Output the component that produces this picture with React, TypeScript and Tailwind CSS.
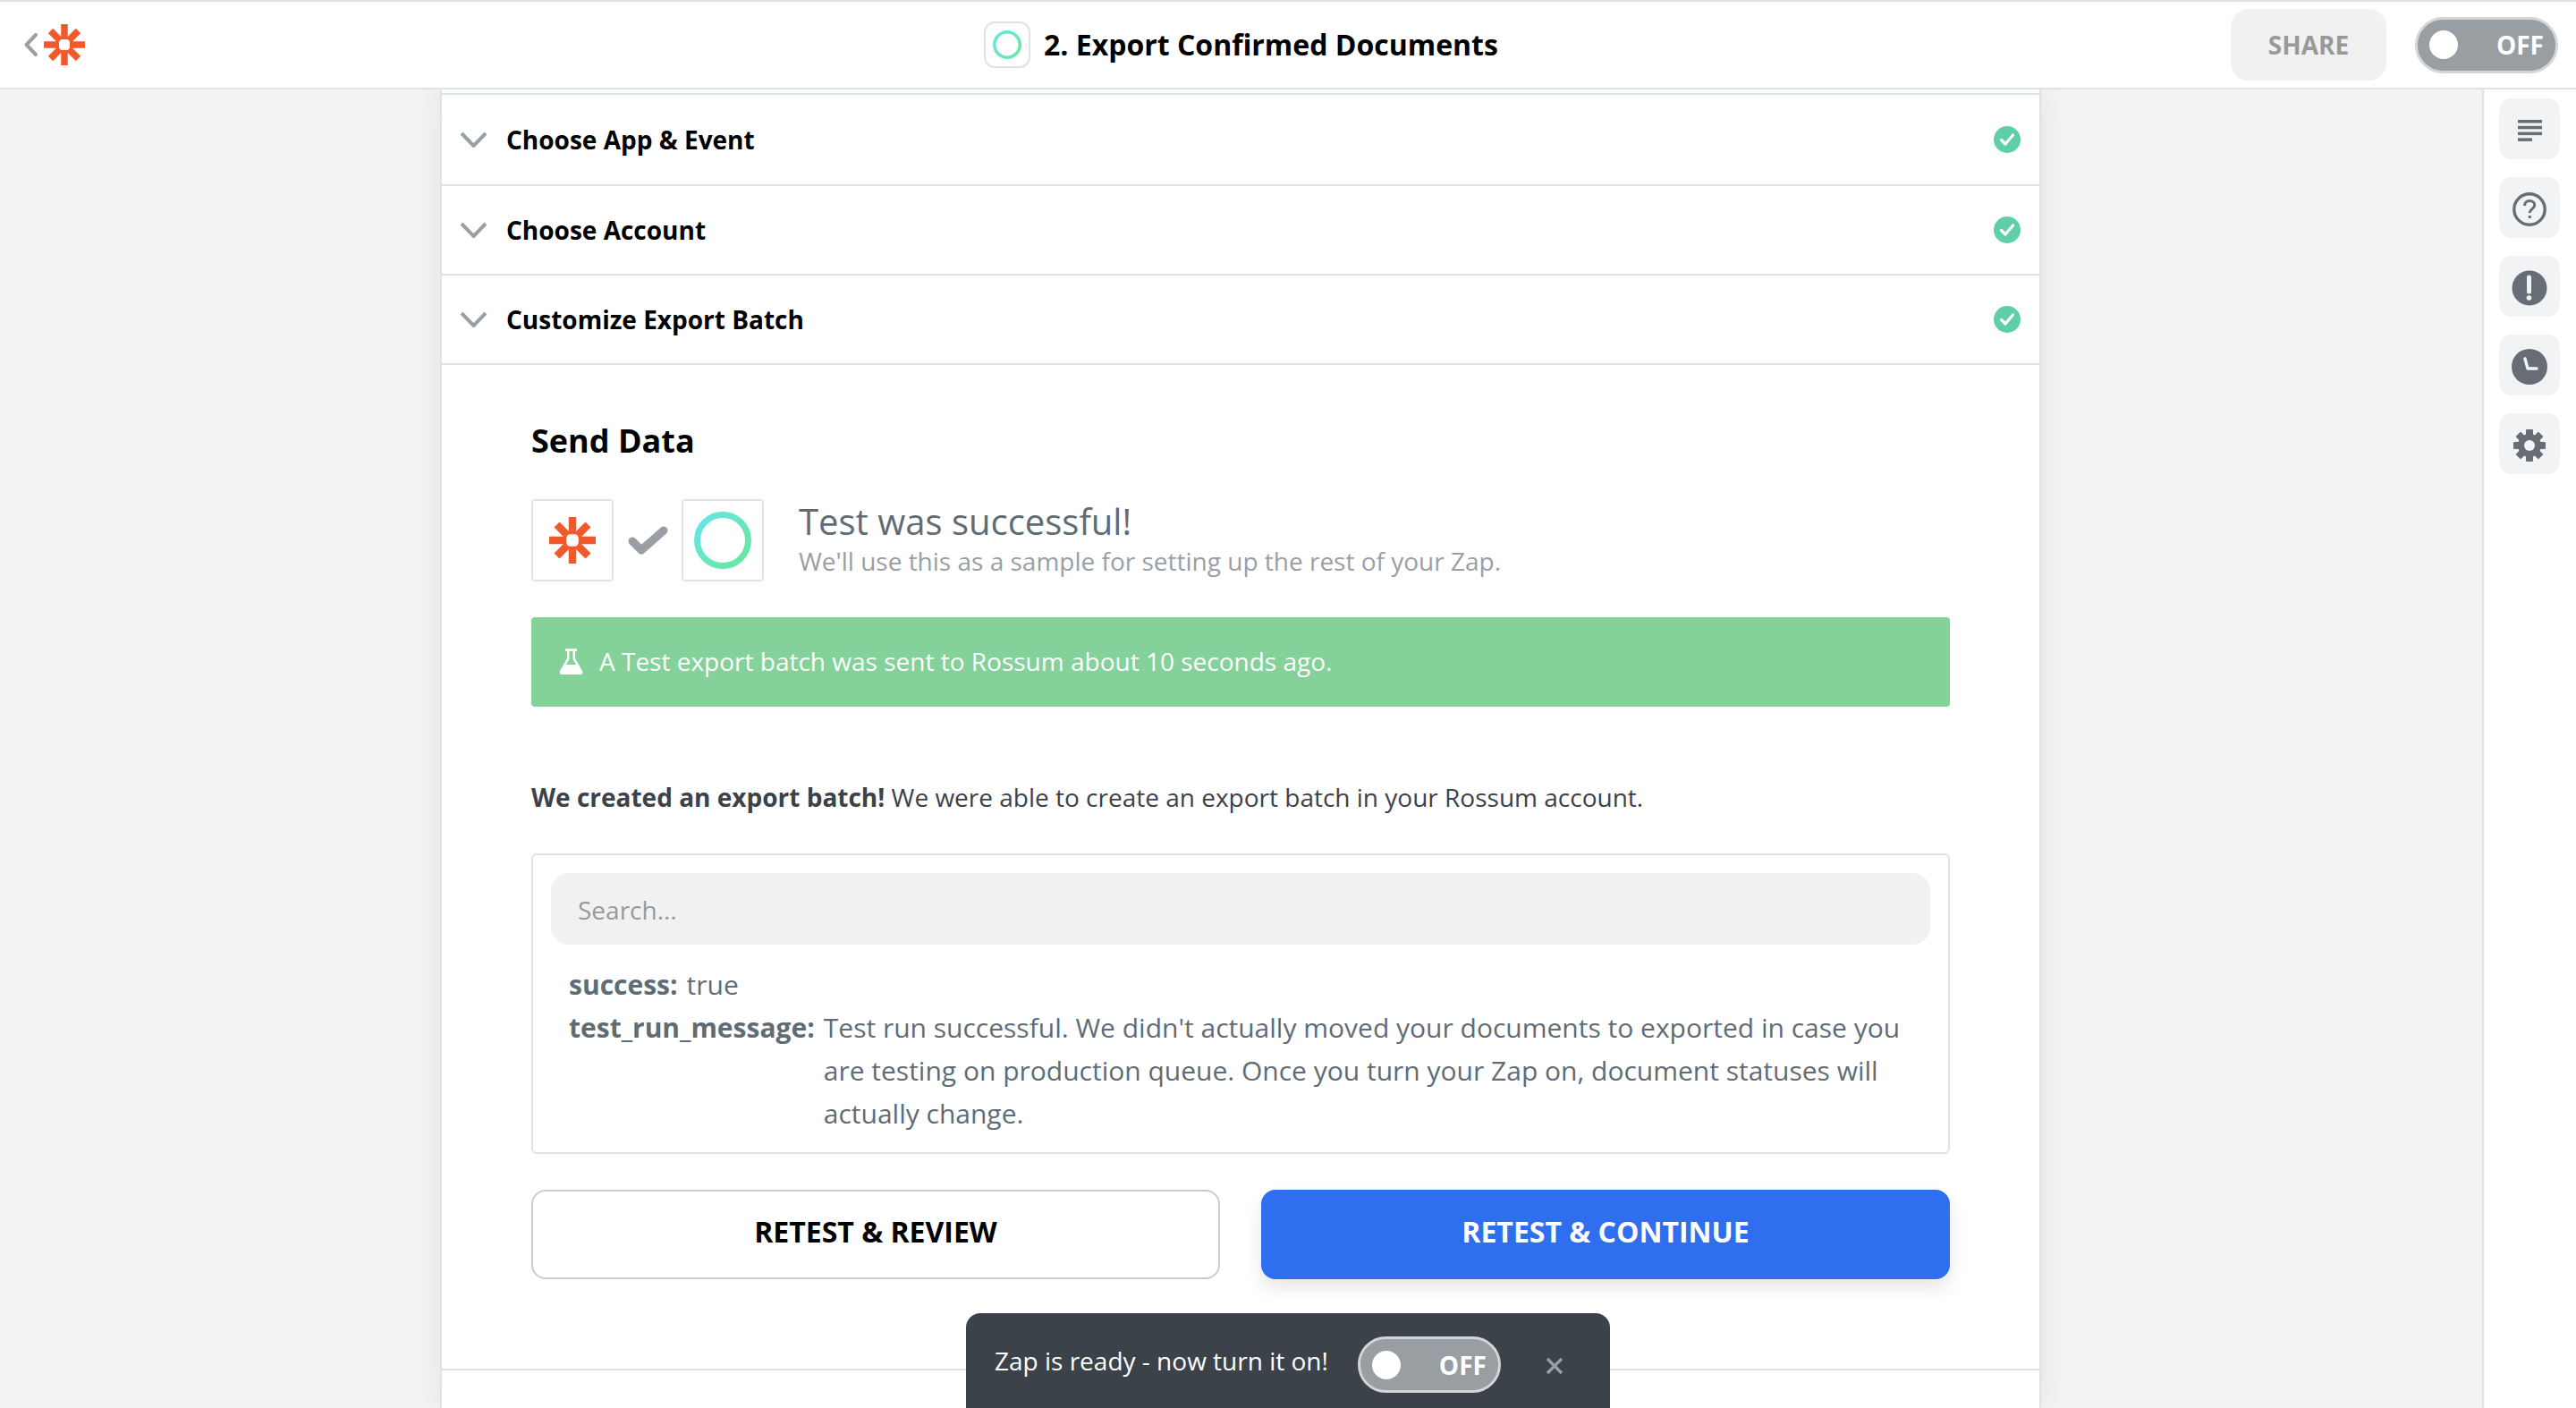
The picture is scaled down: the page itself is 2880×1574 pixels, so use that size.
import { ReactNode } from "react";

function ZapierMark({ className }: { className: string }) {
  return (
    <svg viewBox="0 0 46 46" className={className}>
      <g stroke="#f2592a" strokeWidth="7.5">
        <line x1="23" y1="0" x2="23" y2="46" />
        <line x1="0" y1="23" x2="46" y2="23" />
        <line x1="7.5" y1="7.5" x2="38.5" y2="38.5" />
        <line x1="38.5" y1="7.5" x2="7.5" y2="38.5" />
      </g>
      <rect x="17" y="17" width="12" height="12" rx="4" fill="#fff" />
    </svg>
  );
}

function RossumRing({ className }: { className: string }) {
  return (
    <svg viewBox="0 0 32 32" className={className}>
      <defs>
        <linearGradient id="ring" x1="0" y1="0" x2="1" y2="1">
          <stop offset="0" stopColor="#64e6ea" />
          <stop offset="1" stopColor="#68e89a" />
        </linearGradient>
      </defs>
      <circle cx="16" cy="16" r="14.25" fill="none" stroke="url(#ring)" strokeWidth="3.5" />
    </svg>
  );
}

function Toggle() {
  return (
    <div className="flex h-[63px] w-[160px] items-center justify-between rounded-full border-[3px] border-[#d3d5d7] bg-[#999ea2] pl-[13px] pr-[13px]">
      <span className="h-[32px] w-[32px] rounded-full bg-white" />
      <span className="text-[28px] font-bold leading-none text-white">OFF</span>
    </div>
  );
}

function Row({ label, height }: { label: string; height: string }) {
  return (
    <div className={`flex ${height} items-center border-b-2 border-[#dfe3e6] pl-[20px] pr-[21px]`}>
      <svg viewBox="0 0 31 18" className="h-[18px] w-[31px]">
        <polyline points="2,2 15.5,16 29,2" fill="none" stroke="#99a0a5" strokeWidth="4" />
      </svg>
      <span className="ml-[21px] flex-1 text-[28px] font-bold text-black">{label}</span>
      <svg viewBox="0 0 30 30" className="h-[30px] w-[30px]">
        <circle cx="15" cy="15" r="15" fill="#5fcfa9" />
        <polyline points="8.5,15.5 13,20 21.5,10" fill="none" stroke="#fff" strokeWidth="3.2" strokeLinecap="round" strokeLinejoin="round" />
      </svg>
    </div>
  );
}

function SideButton({ children }: { children: ReactNode }) {
  return (
    <div className="flex h-[68px] w-[68px] items-center justify-center rounded-[14px] bg-[#f1f3f5] pt-[3px]">
      {children}
    </div>
  );
}

export default function App() {
  return (
    <div className="flex h-[1574px] w-[2880px] flex-col overflow-hidden bg-[#f1f3f5] font-['Open_Sans',sans-serif]">
      <header className="relative flex h-[100px] items-center justify-between border-y-2 border-[#dfe3e6] bg-white pl-[27px] pr-[20px]">
        <div className="flex items-center gap-[7px]">
          <svg viewBox="0 0 15 26" className="h-[26px] w-[15px]">
            <polyline points="13,2 2.5,13 13,24" fill="none" stroke="#99a0a5" strokeWidth="4" strokeLinecap="round" strokeLinejoin="round" />
          </svg>
          <ZapierMark className="h-[46px] w-[46px]" />
        </div>
        <div className="absolute left-[1100px] top-[22px] flex items-center gap-[15px]">
          <div className="flex h-[52px] w-[52px] items-center justify-center rounded-[12px] border-2 border-[#dfe3e6]">
            <RossumRing className="h-[32px] w-[32px]" />
          </div>
          <h1 className="text-[32px] font-bold text-black">2. Export Confirmed Documents</h1>
        </div>
        <div className="flex items-center gap-[32px]">
          <div className="flex h-[80px] w-[174px] items-center justify-center rounded-[20px] bg-[#f1f1f1] text-[28px] font-bold text-[#999]">
            SHARE
          </div>
          <Toggle />
        </div>
      </header>

      <div className="flex flex-1">
        <div className="flex-1 pl-[492px]">
          <main className="h-full w-[1790px] border-x-2 border-[#dfe3e6] bg-white pt-[4px] shadow-[0_0_36px_rgba(0,0,0,0.07)]">
            <div className="border-t-2 border-[#dfe3e6]">
              <Row label="Choose App & Event" height="h-[102px]" />
              <Row label="Choose Account" height="h-[100px]" />
              <Row label="Customize Export Batch" height="h-[100px]" />
            </div>

            <section className="border-b-2 border-[#dfe3e6] px-[100px] pb-[100px] pt-[60px]">
              <h2 className="text-[36px] font-bold leading-[50px] text-black">Send Data</h2>

              <div className="mt-[40px] flex items-center">
                <div className="flex h-[92px] w-[92px] items-center justify-center rounded-[4px] border-2 border-[#dfe3e6]">
                  <ZapierMark className="h-[52px] w-[52px]" />
                </div>
                <svg viewBox="0 0 45 33" className="ml-[16px] h-[33px] w-[45px]">
                  <polyline points="5,17 15,27 40,5" fill="none" stroke="#999fa4" strokeWidth="9" strokeLinecap="round" strokeLinejoin="round" />
                </svg>
                <div className="ml-[15px] flex h-[92px] w-[92px] items-center justify-center rounded-[4px] border-2 border-[#dfe3e6]">
                  <RossumRing className="h-[64px] w-[64px]" />
                </div>
                <div className="ml-[39px] -mt-[4px]">
                  <div className="text-[40px] leading-[50px] text-[#5f6c75]">Test was successful!</div>
                  <div className="text-[28px] leading-[38px] text-[#999fa4]">We'll use this as a sample for setting up the rest of your Zap.</div>
                </div>
              </div>

              <div className="mt-[40px] flex h-[100px] items-center rounded-[4px] bg-[#84d19a] pb-[2px] pl-[31px] text-[28px] text-white">
                <svg viewBox="0 0 27 30" className="h-[30px] w-[27px]">
                  <path d="M7 1h13v3h-2v8l8 14c1 2 0 4-2 4H3c-2 0-3-2-2-4l8-14V4H7z M11.5 4v9L8 19h11l-3.5-6V4z" fill="#fff" fillRule="evenodd" />
                </svg>
                <span className="ml-[18px]">A Test export batch was sent to Rossum about 10 seconds ago.</span>
              </div>

              <p className="mt-[81px] text-[28px] leading-[40px] text-[#3b4249]">
                <strong className="font-bold">We created an export batch!</strong> We were able to create an export batch in your Rossum account.
              </p>

              <div className="mt-[43px] rounded-[6px] border-2 border-[#dfe3e6] px-[20px] pb-[19px] pt-[20px]">
                <div className="flex h-[80px] items-center rounded-[20px] bg-[#f1f1f1] pl-[30px] pt-[1px] text-[28px] text-[#999]">
                  Search...
                </div>
                <div className="mt-[21px] pl-[20px] pr-[10px] text-[30px] leading-[48px] text-[#5f6c75]">
                  <div className="flex gap-[10px]">
                    <span className="font-bold">success:</span>
                    <span>true</span>
                  </div>
                  <div className="flex gap-[10px]">
                    <span className="font-bold">test_run_message:</span>
                    <span className="flex-1">
                      Test run successful. We didn't actually moved your documents to exported in case you are testing on production queue. Once you turn your Zap on, document statuses will actually change.
                    </span>
                  </div>
                </div>
              </div>

              <div className="mt-[40px] grid grid-cols-2 gap-[46px]">
                <button className="h-[100px] rounded-[16px] border-2 border-[#cccccc] bg-white pb-[6px] text-[32px] font-bold text-black">
                  RETEST &amp; REVIEW
                </button>
                <button className="h-[100px] rounded-[16px] bg-[#2f6eef] pb-[6px] text-[32px] font-bold text-white shadow-[0_10px_20px_rgba(0,0,0,0.1)]">
                  RETEST &amp; CONTINUE
                </button>
              </div>
            </section>
          </main>
        </div>

        <aside className="flex w-[105px] flex-col gap-[20px] border-l-2 border-[#dfe3e6] bg-white pl-[17px] pt-[10px]">
          <SideButton>
            <svg viewBox="0 0 27 24" className="h-[24px] w-[27px]" fill="#666d75">
              <rect y="0" width="27" height="3.5" />
              <rect y="6.8" width="27" height="3.5" />
              <rect y="13.6" width="27" height="3.5" />
              <rect y="20.4" width="16" height="3.5" />
            </svg>
          </SideButton>
          <SideButton>
            <svg viewBox="0 0 38 38" className="h-[38px] w-[38px]">
              <circle cx="19" cy="19" r="17.2" fill="none" stroke="#666d75" strokeWidth="3.4" />
              <path d="M13.5 15c0-3.5 2.5-5.5 5.7-5.5s5.5 2 5.5 4.8c0 4.3-5.5 4.4-5.5 8.7" fill="none" stroke="#666d75" strokeWidth="3" />
              <rect x="17.8" y="26" width="3" height="3" fill="#666d75" />
            </svg>
          </SideButton>
          <SideButton>
            <svg viewBox="0 0 40 40" className="h-[40px] w-[40px]">
              <circle cx="20" cy="20" r="19.5" fill="#666d75" />
              <line x1="19.5" y1="8" x2="19.5" y2="24" stroke="#f1f3f5" strokeWidth="5" strokeLinecap="round" />
              <circle cx="19.5" cy="31" r="2.8" fill="#f1f3f5" />
            </svg>
          </SideButton>
          <SideButton>
            <svg viewBox="0 0 40 40" className="h-[40px] w-[40px]">
              <circle cx="20" cy="20" r="20" fill="#666d75" />
              <polyline points="15,11 18,22 28,22" fill="none" stroke="#f1f3f5" strokeWidth="3.4" strokeLinecap="round" strokeLinejoin="round" />
            </svg>
          </SideButton>
          <SideButton>
            <svg viewBox="0 0 36 36" className="h-[36px] w-[36px]" fill="#666d75">
              <rect x="14" y="0" width="8" height="36" rx="1" />
              <rect x="14" y="0" width="8" height="36" rx="1" transform="rotate(45 18 18)" />
              <rect x="14" y="0" width="8" height="36" rx="1" transform="rotate(90 18 18)" />
              <rect x="14" y="0" width="8" height="36" rx="1" transform="rotate(135 18 18)" />
              <circle cx="18" cy="18" r="13" />
              <circle cx="18" cy="18" r="6" fill="#f1f3f5" />
            </svg>
          </SideButton>
        </aside>
      </div>

      <div className="absolute left-[1080px] top-[1468px] flex h-[106px] w-[720px] items-start rounded-t-[16px] bg-[#3b4249] pl-[32px] pt-[26px]">
        <span className="mt-[7px] text-[28px] leading-[40px] text-white">Zap is ready - now turn it on!</span>
        <div className="ml-[33px]">
          <Toggle />
        </div>
        <svg viewBox="0 0 20 20" className="ml-[50px] mt-[23px] h-[20px] w-[20px]">
          <path d="M2 2L18 18M18 2L2 18" stroke="#99a0a5" strokeWidth="3.4" />
        </svg>
      </div>
    </div>
  );
}
